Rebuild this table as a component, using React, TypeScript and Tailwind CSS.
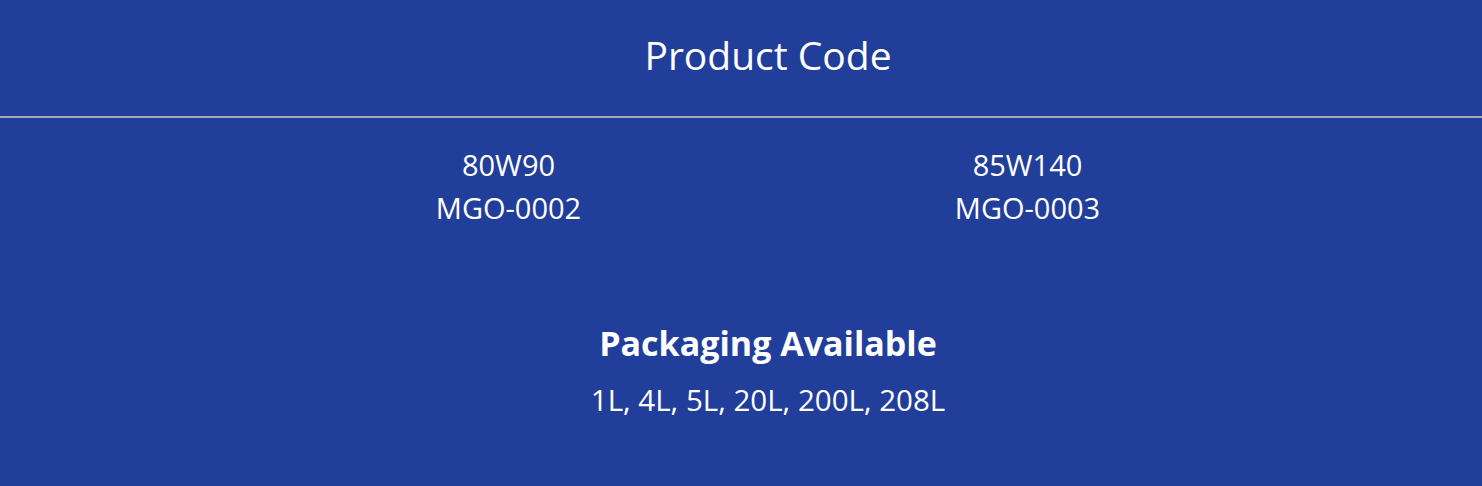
export default function App() {
  return (
    <div
      className="w-full h-[486px] bg-[#213e9b] text-white flex flex-col pl-[54px]"
      style={{ fontFamily: '"Open Sans", "Noto Sans", sans-serif' }}
    >
      <div className="h-[116px] flex items-center justify-center pb-[8px]">
        <h2 className="text-[39px] leading-none font-normal">Product Code</h2>
      </div>
      <div className="h-[2px] bg-[#a3a8b8] -ml-[54px]" />
      <div className="mx-auto w-[1038px] grid grid-cols-2 pt-[25px] text-[29px] leading-[43px] text-center">
        <div>
          <div>80W90</div>
          <div>MGO-0002</div>
        </div>
        <div>
          <div>85W140</div>
          <div>MGO-0003</div>
        </div>
      </div>
      <div className="flex flex-col items-center pt-[97px]">
        <h3 className="text-[34px] leading-none font-bold">Packaging Available</h3>
        <p className="text-[29.5px] leading-none mt-[25px]">1L, 4L, 5L, 20L, 200L, 208L</p>
      </div>
    </div>
  );
}
